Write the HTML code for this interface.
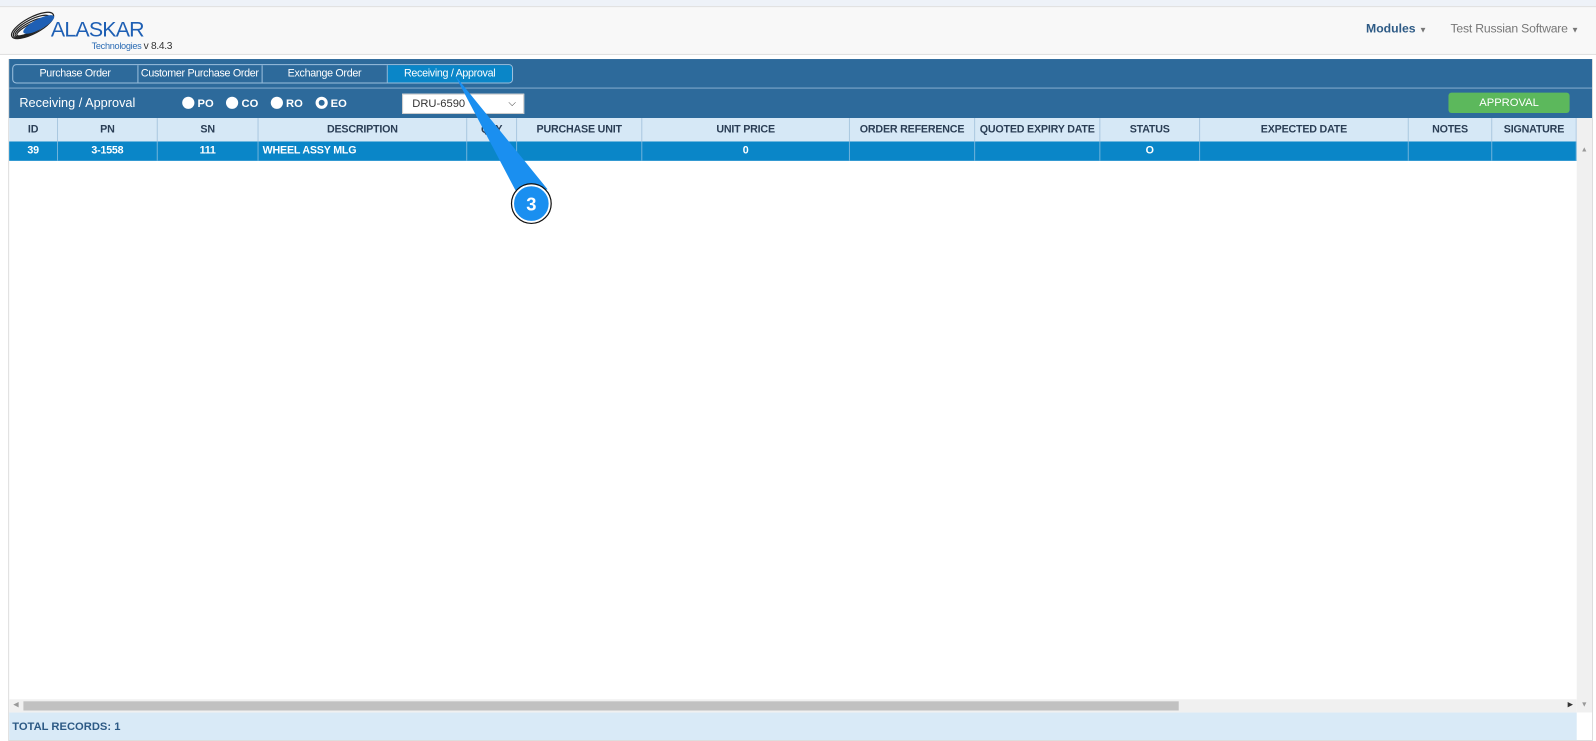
<!DOCTYPE html>
<html><head><meta charset="utf-8"><style>
*{box-sizing:border-box;margin:0;padding:0}
body{width:1596px;height:741px;background:#fff;font-family:"Liberation Sans",Arial,sans-serif;position:relative;overflow:hidden}
#w{position:absolute;left:0;top:0;width:1568px;height:728px;transform:scale(1.0179);transform-origin:0 0}
.abs{position:absolute}
.top{left:0;top:0;width:1568px;height:6px;background:#eef2f8}
.nav{left:0;top:6px;width:1568px;height:48px;background:#f8f8f8;border-top:1px solid #e0e0e0;border-bottom:1px solid #e0e0e0}
.panel{left:8px;top:58px;width:1557px;height:670px;border:1px solid #ddd;background:#fff}
.tabrow{left:9px;top:58px;width:1555px;height:29px;background:#2d6a9b;border-bottom:1px solid #7fa9cc}
.tabs{left:12px;top:63px;width:492px;height:19px;border:1px solid #9cc0de;border-radius:4px;overflow:hidden;display:flex}
.tabs div{height:100%;color:#fff;font-size:10.5px;text-align:center;line-height:17px;border-right:1px solid #9cc0de;white-space:nowrap;letter-spacing:-0.3px}
.row2{left:9px;top:87px;width:1555px;height:29px;background:#2d6a9b}
.hdr{left:9px;top:116px;width:1540px;height:23px;background:#d6e8f6}
.data{left:9px;top:139px;width:1540px;height:19px;background:#0a86c8}
.c{position:absolute;top:0;height:100%;font-size:10.5px;font-weight:bold;text-align:center;border-right:1px solid #aac8e0;white-space:nowrap;overflow:hidden;letter-spacing:-0.2px}
.hdr .c{color:#2b3e55;line-height:23px}
.data .c{color:#fff;line-height:19px;border-right:1px solid #6fb3db}
</style></head><body><div id="w">
<div class="abs top"></div>
<div class="abs nav"></div>
<svg class="abs" style="left:8px;top:9px" width="52" height="32" viewBox="0 0 52 32">
<g fill="none" stroke="#222" stroke-width="1.2"><ellipse cx="24" cy="16" rx="23" ry="8" transform="rotate(-28 24 16)"/><ellipse cx="23" cy="17" rx="20" ry="6.5" transform="rotate(-28 23 17)"/><ellipse cx="22" cy="18" rx="17" ry="5" transform="rotate(-28 22 18)"/><ellipse cx="21" cy="19" rx="14" ry="3.6" transform="rotate(-28 21 19)"/></g>
<ellipse cx="30" cy="15" rx="17" ry="5" transform="rotate(-28 30 15)" fill="#1e5fb4"/></svg>
<div class="abs" style="left:50px;top:18px;font-size:21px;color:#1e5fb4;letter-spacing:-0.8px">ALASKAR</div>
<div class="abs" style="left:90px;top:40px;font-size:9px;color:#2c6cb4;letter-spacing:-0.3px">Technologies <span style="color:#333;font-size:10px">v 8.4.3</span></div>
<div class="abs" style="left:1342px;top:21px;font-size:12px;font-weight:bold;color:#2d5a85">Modules <span style="font-size:8px;color:#777">▼</span></div>
<div class="abs" style="left:1425px;top:21px;font-size:12px;color:#777;letter-spacing:-0.2px">Test Russian Software <span style="font-size:8px">▼</span></div>
<div class="abs panel"></div>
<div class="abs tabrow"></div>
<div class="abs tabs"><div style="width:123px">Purchase Order</div><div style="width:123px">Customer Purchase Order</div><div style="width:123px">Exchange Order</div><div style="width:123px;background:#0a86c8;border-right:0">Receiving / Approval</div></div>
<div class="abs row2"></div>
<div class="abs" style="left:19px;top:94px;font-size:12.5px;color:#fff">Receiving / Approval</div>
<div class="abs" style="left:179px;top:95px;font-size:11px;color:#fff;font-weight:bold;white-space:nowrap">
<span style="display:inline-block;width:12px;height:12px;border-radius:50%;background:#fff;vertical-align:-2px"></span> PO&nbsp;&nbsp;&nbsp;
<span style="display:inline-block;width:12px;height:12px;border-radius:50%;background:#fff;vertical-align:-2px"></span> CO&nbsp;&nbsp;&nbsp;
<span style="display:inline-block;width:12px;height:12px;border-radius:50%;background:#fff;vertical-align:-2px"></span> RO&nbsp;&nbsp;&nbsp;
<span style="display:inline-block;width:12px;height:12px;border-radius:50%;background:#fff;border:3.5px solid #fff;box-shadow:inset 0 0 0 3px #2d6a9b;vertical-align:-2px"></span> EO</div>
<div class="abs" style="left:395px;top:92px;width:120px;height:20px;background:#fff;border:1px solid #ccc;font-size:11px;line-height:18px;padding-left:9px;color:#333">DRU-6590<span style="position:absolute;right:7px;top:0;font-size:10px">⌵</span></div>
<div class="abs" style="left:1423px;top:91px;width:119px;height:20px;background:#5cb85c;border-radius:3px;color:#fff;font-size:11px;text-align:center;line-height:20px">APPROVAL</div>
<div class="abs hdr">
<div class="c" style="left:0;width:48px">ID</div><div class="c" style="left:48px;width:98px">PN</div><div class="c" style="left:146px;width:99px">SN</div><div class="c" style="left:245px;width:205px">DESCRIPTION</div><div class="c" style="left:450px;width:49px">QTY</div><div class="c" style="left:499px;width:123px">PURCHASE UNIT</div><div class="c" style="left:622px;width:204px">UNIT PRICE</div><div class="c" style="left:826px;width:123px">ORDER REFERENCE</div><div class="c" style="left:949px;width:123px">QUOTED EXPIRY DATE</div><div class="c" style="left:1072px;width:98px">STATUS</div><div class="c" style="left:1170px;width:205px">EXPECTED DATE</div><div class="c" style="left:1375px;width:82px">NOTES</div><div class="c" style="left:1457px;width:83px">SIGNATURE</div></div>
<div class="abs data">
<div class="c" style="left:0;width:48px">39</div><div class="c" style="left:48px;width:98px">3-1558</div><div class="c" style="left:146px;width:99px">111</div><div class="c" style="left:245px;width:205px;text-align:left;padding-left:4px">WHEEL ASSY MLG</div><div class="c" style="left:450px;width:49px"></div><div class="c" style="left:499px;width:123px"></div><div class="c" style="left:622px;width:204px">0</div><div class="c" style="left:826px;width:123px"></div><div class="c" style="left:949px;width:123px"></div><div class="c" style="left:1072px;width:98px">O</div><div class="c" style="left:1170px;width:205px"></div><div class="c" style="left:1375px;width:82px"></div><div class="c" style="left:1457px;width:83px"></div></div>
<div class="abs" style="left:1549px;top:116px;width:15px;height:584px;background:#f0f0f0"></div>
<div class="abs" style="left:1553px;top:144px;font-size:7px;color:#999">▲</div>
<div class="abs" style="left:1553px;top:689px;font-size:7px;color:#999">▼</div>
<div class="abs" style="left:9px;top:687px;width:1540px;height:13px;background:#f0f0f0"></div>
<div class="abs" style="left:23px;top:689px;width:1135px;height:9px;background:#c1c1c1"></div>
<div class="abs" style="left:13px;top:688px;font-size:7px;color:#999">◀</div>
<div class="abs" style="left:1540px;top:688px;font-size:7px;color:#333">▶</div>
<div class="abs" style="left:9px;top:700px;width:1540px;height:27px;background:#d9eaf7"></div>
<div class="abs" style="left:12px;top:708px;font-size:11px;font-weight:bold;color:#2d5a85">TOTAL RECORDS: 1</div>
<svg class="abs" style="left:0;top:0" width="1568" height="728">
<polygon points="447,74 508,190 538,186" fill="#1a8ff0"/>
<circle cx="522" cy="200" r="18" fill="#1a8ff0" stroke="#fff" stroke-width="2"/>
<circle cx="522" cy="200" r="19.5" fill="none" stroke="#111" stroke-width="1.2"/>
<text x="522" y="207" text-anchor="middle" font-family="Liberation Sans" font-weight="bold" font-size="18" fill="#fff">3</text>
</svg>
</div></body></html>
